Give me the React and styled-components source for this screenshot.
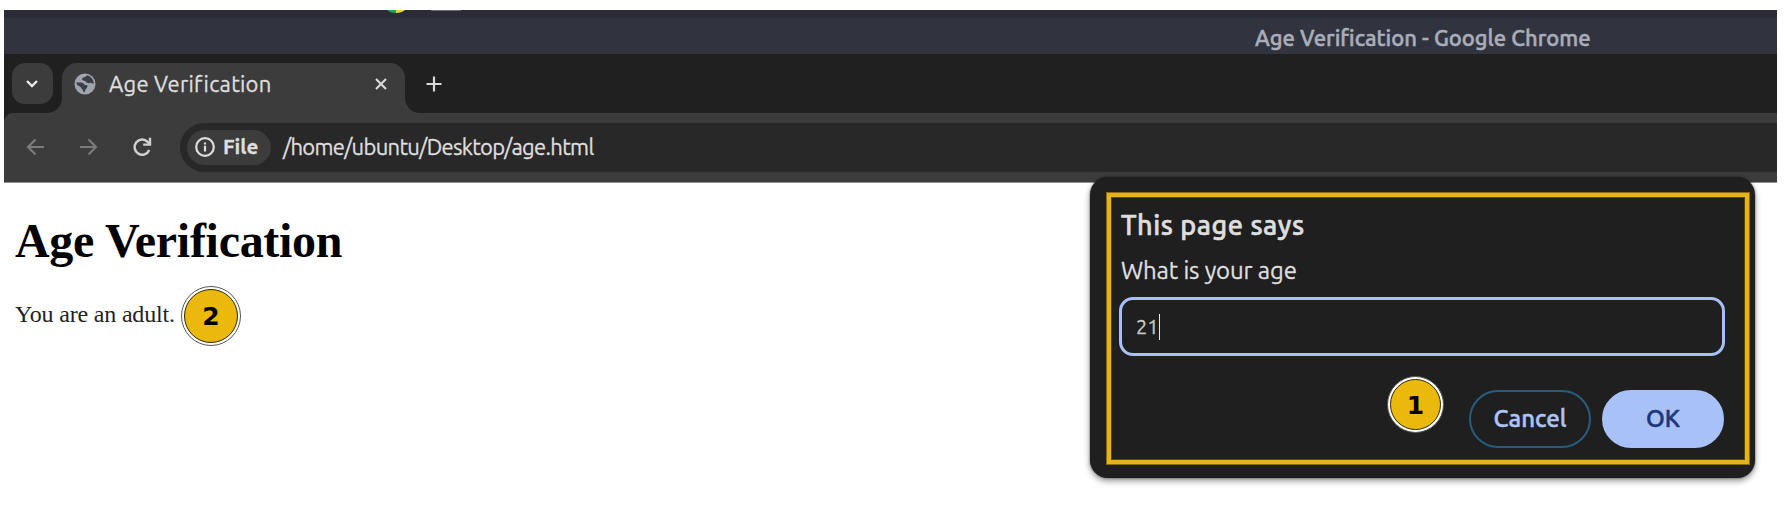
import React from 'react';
import styled, { createGlobalStyle } from 'styled-components';

const GlobalStyle = createGlobalStyle`
  * { box-sizing: border-box; }
  body { margin: 0; background: #fff; overflow: hidden; }
`;

const ui = `'Ubuntu', 'Noto Sans', sans-serif`;

const Page = styled.div`
  position: relative;
  width: 1786px;
  height: 526px;
  padding: 10px 9px 0 4px;
  background: #fff;
  font-family: ${ui};
`;

const Label = styled.span`
  display: inline-block;
  white-space: nowrap;
  font-size: ${(p) => p.$size}px;
  font-weight: ${(p) => p.$weight || 400};
  letter-spacing: ${(p) => p.$track || 0}px;
  color: ${(p) => p.$color || '#dedede'};
  -webkit-text-stroke: ${(p) => p.$stroke ?? 0.3}px currentColor;
  line-height: 30px;
`;

const DesktopStrip = styled.div`
  height: 8px;
  padding-left: 382px;
  background: #292c36;
  overflow: hidden;
  display: flex;
  gap: 25px;
`;

const DockSliver = styled.div`
  width: 30px;
  height: 1px;
  background: #6a6c70;
`;

const TitleBar = styled.header`
  height: 36px;
  padding: 5px 0 0 1251px;
  background: #31343f;
`;

const TabStrip = styled.div`
  height: 59px;
  padding: 9px 0 0 8px;
  display: flex;
  align-items: flex-start;
  background: #202020;
`;

const TabSearch = styled.button`
  width: 41px;
  height: 41px;
  padding: 0 1px 0 0;
  border: 0;
  border-radius: 13px;
  background: #3c3c3c;
  display: grid;
  place-items: center;
`;

const Tab = styled.div`
  position: relative;
  width: 343px;
  height: 50px;
  margin-left: 9px;
  padding: 0 17px 8px 12px;
  border-radius: 15px 15px 0 0;
  background: #3c3c3c;
  display: flex;
  align-items: center;
  &::before, &::after {
    content: '';
    position: absolute;
    bottom: 0;
    width: 15px;
    height: 15px;
  }
  &::before {
    left: -15px;
    background: radial-gradient(circle at 0 0, transparent 14.5px, #3c3c3c 15.5px);
  }
  &::after {
    right: -15px;
    background: radial-gradient(circle at 100% 0, transparent 14.5px, #3c3c3c 15.5px);
  }
`;

const TabTitle = styled.div`
  flex: 1;
  margin-left: 13px;
  height: 31px;
`;

const NewTab = styled.div`
  margin: 13px 0 0 21px;
  height: 16px;
  display: flex;
`;

const ToolbarBack = styled.div`
  background: #202020;
`;

const Toolbar = styled.div`
  height: 70px;
  padding: 10px 0 0 22px;
  display: flex;
  align-items: flex-start;
  background: #3c3c3c;
  border-bottom: 1px solid #8f8f8f;
  border-radius: 9px 0 0 0;
`;

const NavIcons = styled.nav`
  width: 154px;
  height: 49px;
  padding-bottom: 1px;
  display: flex;
  align-items: center;
  gap: 34px;
`;

const Omnibox = styled.div`
  flex: 1;
  height: 49px;
  padding: 0 0 1px 7px;
  border-radius: 25px 0 0 25px;
  background: #282828;
  display: flex;
  align-items: center;
`;

const Chip = styled.div`
  width: 84px;
  height: 35px;
  padding-left: 8px;
  border-radius: 18px;
  background: #3c3c3c;
  display: flex;
  align-items: center;
  gap: 8px;
  margin-right: 12px;
`;

const Content = styled.main`
  padding: 33px 0 0 11px;
  font-family: 'Liberation Serif', serif;
`;

const Heading = styled.h1`
  margin: 0;
  font-size: 48px;
  line-height: 50px;
  letter-spacing: -0.3px;
  color: #000;
`;

const Result = styled.div`
  display: flex;
  align-items: center;
  height: 60px;
  margin-top: 20px;
`;

const ResultText = styled.p`
  width: 166px;
  margin: 0;
  padding-bottom: 4px;
  white-space: nowrap;
  font-size: 24px;
  line-height: 30px;
  letter-spacing: -0.18px;
  color: #241f24;
`;

const Badge = styled.div`
  width: ${(p) => p.$size}px;
  height: ${(p) => p.$size}px;
  flex: none;
  border: 1px solid #555;
  border-radius: 50%;
  padding: 2px;
  background: #fff;
  span {
    display: grid;
    place-items: center;
    width: 100%;
    height: 100%;
    border: 1.5px solid #302800;
    border-radius: 50%;
    background: #ebb90b;
    color: #000;
    font: bold 25px 'DejaVu Sans', sans-serif;
    padding-top: 1px;
  }
`;

const Dialog = styled.section`
  position: absolute;
  left: 1090px;
  top: 177px;
  width: 665px;
  height: 301px;
  padding: 15px 5px 13px 16px;
  border-radius: 18px;
  background: #1f1f1f;
  box-shadow: 0 3px 6px rgba(0, 0, 0, 0.42), 0 0 2px rgba(0, 0, 0, 0.6);
`;

const Highlight = styled.div`
  height: 273px;
  padding: 13px 21px 0 8px;
  border: 5px solid #e6b414;
  outline: 1px solid #8a6b12;
  outline-offset: -1px;
  box-shadow: inset 0 0 0 1px #5a4710;
  display: flex;
  flex-direction: column;
`;

const DialogLine = styled.div`
  height: 30px;
  padding-left: 2px;
  margin-bottom: ${(p) => p.$gap}px;
`;

const Field = styled.div`
  height: 59px;
  width: 606px;
  flex: none;
  padding-left: 14px;
  border: 3px solid #a8c0f3;
  border-radius: 14px;
  display: flex;
  align-items: center;
`;

const Caret = styled.i`
  width: 1.5px;
  height: 26px;
  background: #e8e8e8;
`;

const Actions = styled.div`
  display: flex;
  align-items: flex-start;
  justify-content: flex-end;
  margin-top: 20px;
`;

const Button = styled.button`
  width: 122px;
  height: 58px;
  padding: 0 0 1px;
  border: 2px solid ${(p) => (p.$primary ? '#a8c2f8' : '#285c7e')};
  border-radius: 29px;
  background: ${(p) => (p.$primary ? '#a8c2f8' : 'transparent')};
  margin: 14px 0 0 ${(p) => (p.$primary ? 11 : 25)}px;
  font-family: ${ui};
`;

const Stroke = ({ w, h, d, color = '#d8d8d8', sw = 2.2 }) => (
  <svg width={w} height={h} viewBox={`0 0 ${w} ${h}`} fill="none" stroke={color} strokeWidth={sw}>
    <path d={d} />
  </svg>
);

const Globe = () => (
  <svg width="22" height="22" viewBox="0 0 22 22">
    <circle cx="11" cy="11" r="10.5" fill="#a0a4ad" />
    <path
      d="M2.3 9.5 H7.5 C9.5 9.5 9.5 12 11.5 12 C13.8 12 14 14 12.7 15 C11.2 16 11.6 18 10 19.7 C9 18 9 17 8 16 C6.5 14.8 6.8 13.4 5 13 C3.6 12.6 2.6 11.5 2.3 9.5 Z M13 2.3 C12.6 4 8.8 4 7.8 6.2 C8.4 7.8 11 7.4 12 8.8 C13 10.2 14.6 10.6 15.6 9.9 C17.1 9.2 18.2 10.9 19.8 10.6 C19.6 6.4 16.8 3.2 13 2.3 Z"
      fill="#3c3f45"
    />
  </svg>
);

const Info = () => (
  <svg width="20" height="20" viewBox="0 0 20 20" fill="none" stroke="#dedede" strokeWidth="2.2">
    <circle cx="10" cy="10" r="8.8" />
    <path d="M10 8.8 V14.5 M10 5.4 V7.5" />
  </svg>
);

const Reload = () => (
  <svg width="20" height="20" viewBox="0 0 20 20">
    <path d="M17.2 13 A7.6 7.6 0 1 1 15.6 4.8 L17 6.5" fill="none" stroke="#d0d0d0" strokeWidth="2.5" />
    <path d="M19.2 0.8 V8.8 H11.2 V6.4 H16.8 V0.8 Z" fill="#d0d0d0" />
  </svg>
);

const LauncherIcon = () => (
  <svg width="20" height="3" viewBox="0 0 20 3">
    <path d="M1 0 H10 V3 Q4 3 1 0" fill="#25a35a" />
    <path d="M10 0 H19 Q16 3 10 3" fill="#ebd52e" />
  </svg>
);

export default function App() {
  return (
    <Page>
      <GlobalStyle />
      <DesktopStrip>
        <LauncherIcon />
        <DockSliver />
      </DesktopStrip>
      <TitleBar>
        <Label $size={22} $weight={500} $stroke={0.5} $color="#a9adba">Age Verification - Google Chrome</Label>
      </TitleBar>
      <TabStrip>
        <TabSearch aria-label="Search tabs">
          <Stroke w={14} h={9} d="M2 2 L7 7 L12 2" color="#e8e8e8" sw={2.4} />
        </TabSearch>
        <Tab>
          <Globe />
          <TabTitle><Label $size={22} $track={0.25}>Age Verification</Label></TabTitle>
          <Stroke w={14} h={14} d="M2 2 L12 12 M12 2 L2 12" />
        </Tab>
        <NewTab><Stroke w={16} h={16} d="M8 0.5 V15.5 M0.5 8 H15.5" /></NewTab>
      </TabStrip>
      <ToolbarBack>
        <Toolbar>
          <NavIcons>
            <Stroke w={19} h={18} d="M18 9 H3 M9.5 1.5 L2 9 L9.5 16.5" color="#7b7b7b" />
            <Stroke w={19} h={18} d="M1 9 H16 M9.5 1.5 L17 9 L9.5 16.5" color="#7b7b7b" />
            <Reload />
          </NavIcons>
          <Omnibox>
            <Chip>
              <Info />
              <Label $size={20.5} $weight={700}>File</Label>
            </Chip>
            <Label $size={22} $track={-0.69}>/home/ubuntu/Desktop/age.html</Label>
          </Omnibox>
        </Toolbar>
      </ToolbarBack>
      <Content>
        <Heading>Age Verification</Heading>
        <Result>
          <ResultText>You are an adult.</ResultText>
          <Badge $size={60}><span>2</span></Badge>
        </Result>
      </Content>
      <Dialog>
        <Highlight>
          <DialogLine $gap={16}><Label $size={27} $weight={500} $stroke={0.6} $track={0.55}>This page says</Label></DialogLine>
          <DialogLine $gap={11}><Label $size={24} $track={-0.15}>What is your age</Label></DialogLine>
          <Field>
            <Label $size={20} $color="#c8c8c8">21</Label>
            <Caret />
          </Field>
          <Actions>
            <Badge $size={57}><span>1</span></Badge>
            <Button><Label $size={24} $weight={500} $stroke={0.5} $color="#adc3f6">Cancel</Label></Button>
            <Button $primary><Label $size={24} $weight={500} $stroke={0.5} $color="#1d377b">OK</Label></Button>
          </Actions>
        </Highlight>
      </Dialog>
    </Page>
  );
}
